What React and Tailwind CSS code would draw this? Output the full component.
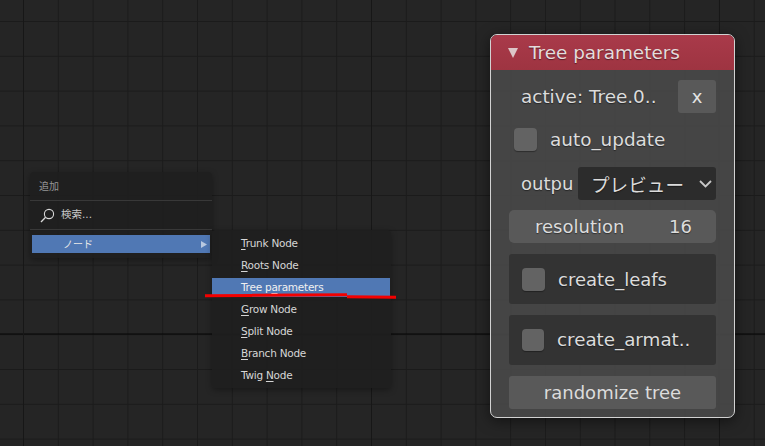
const sans = "font-['DejaVu_Sans','Noto_Sans_CJK_JP',sans-serif]";

function Check({ size = "w-[23px] h-[23px]" }) {
  return <div className={`${size} shrink-0 rounded-[4px] bg-[#636363] shadow-[0_1px_1px_rgba(0,0,0,0.35)]`} />;
}

function MenuItem({ before = "", mark, after, active }) {
  const state = active
    ? "h-[19px] mt-[1px] mb-[2px] mr-[1px] bg-[#5078b4] text-[#f0f0f0]"
    : "h-[22px] text-[#d6d6d6]";
  return (
    <div className={`${state} shrink-0 flex items-center pl-[29px] text-[10.5px] tracking-[-0.25px]`}>
      <span>
        {before}
        <span className="underline underline-offset-2">{mark}</span>
        {after}
      </span>
    </div>
  );
}

export default function App() {
  return (
    <div
      className={`${sans} relative w-[765px] h-[446px] overflow-hidden bg-[#252525] bg-[linear-gradient(to_right,#171717_1px,transparent_1px),linear-gradient(to_bottom,#050505_1.5px,transparent_1.5px),linear-gradient(to_right,#1b1b1b_1px,transparent_1px),linear-gradient(to_bottom,#1b1b1b_1px,transparent_1px)] bg-[size:348px_446px,765px_1000px,34.8px_34.8px,34.8px_34.8px] bg-[position:23px_0,0_333.5px,23px_0,0_21px]`}
    >
      {/* Add menu */}
      <div className="absolute left-[30px] top-[172px] w-[182px] h-[86px] rounded-[4px] bg-[#1f1f1f]/95 shadow-[0_2px_6px_rgba(0,0,0,0.35)] flex flex-col">
        <div className="h-[29px] shrink-0 flex items-center pl-[9px] text-[10px] text-[#969696] border-b border-[#383838]">追加</div>
        <div className="h-[29px] shrink-0 flex items-center pl-[10px] gap-[6px] text-[10.5px] text-[#c8c8c8] border-b border-[#383838]">
          <svg width="15" height="15" viewBox="0 0 15 15" fill="none" stroke="#d8d8d8" strokeWidth="1.1">
            <circle cx="9" cy="6" r="4.6" />
            <path d="M5.6 9.2 1 14" strokeWidth="1.3" />
          </svg>
          <span>検索...</span>
        </div>
        <div className="mx-[2px] mt-[5px] h-[18px] shrink-0 bg-[#5078b4] flex items-center justify-between pl-[31px] pr-[3px] text-[10px] text-[#e8e8e8]">
          <span>ノード</span>
          <svg width="6" height="7" viewBox="0 0 6 7"><path d="M0 0 6 3.5 0 7Z" fill="#b8c8e0" /></svg>
        </div>
      </div>

      {/* Submenu */}
      <div className="absolute left-[212px] top-[230px] w-[179px] h-[158px] rounded-[4px] bg-[#1f1f1f]/95 shadow-[0_2px_6px_rgba(0,0,0,0.35)] flex flex-col pt-[3px]">
        <MenuItem mark="T" after="runk Node" />
        <MenuItem mark="R" after="oots Node" />
        <MenuItem before="Tree p" mark="a" after="rameters" active />
        <MenuItem mark="G" after="row Node" />
        <MenuItem mark="S" after="plit Node" />
        <MenuItem mark="B" after="ranch Node" />
        <MenuItem before="Twig " mark="N" after="ode" />
      </div>

      {/* Red annotation */}
      <svg className="absolute left-[200px] top-[290px]" width="200" height="12" viewBox="0 0 200 12" fill="none" stroke="#f30000" strokeWidth="3">
        <path d="M5 5.8 52 5.5" />
        <path d="M52 5.3 147 4.8" />
        <path d="M147 6.8 196 7.2" />
      </svg>

      {/* Node panel */}
      <div className="absolute left-[490px] top-[34px] w-[245px] h-[384px] rounded-[7px] border border-[#d2d2d2] bg-[#474747]/95 shadow-[0_3px_14px_rgba(0,0,0,0.5)] overflow-hidden flex flex-col text-[18px] text-[#dcdcdc] [text-shadow:0_1px_1px_rgba(0,0,0,0.45)]">
        <div className="h-[35px] shrink-0 bg-[linear-gradient(to_bottom,#a93a4a,#9e3441)] flex items-center pl-[17px] gap-[11px] text-[#e4dcdc]">
          <svg width="10" height="10" viewBox="0 0 10 10"><path d="M0 0H10L5 10Z" fill="#dcc6c8" /></svg>
          <span className="text-[18.4px]">Tree parameters</span>
        </div>
        <div className="flex-1 flex flex-col pl-[18px] pr-[18px] pt-[10px]">
          <div className="h-[33px] flex items-center justify-between pl-[12px]">
            <span className="text-[18.4px]">active: Tree.0..</span>
            <button className="w-[38px] h-[33px] rounded-[3px] bg-[#595959] text-[#e4e4e4]">x</button>
          </div>
          <div className="h-[23px] mt-[15px] flex items-center pl-[5px] gap-[13px]">
            <Check />
            <span className="text-[18.4px]">auto_update</span>
          </div>
          <div className="h-[33px] mt-[16px] flex items-center justify-between pl-[12px]">
            <span>outpu</span>
            <div className="w-[138px] h-[33px] rounded-[3px] bg-[#2c2c2c] flex items-center justify-between pl-[13px] pr-[4px] font-['Noto_Sans_CJK_JP',sans-serif]">
              <span className="text-[18.6px]">プレビュー</span>
              <svg width="13" height="8" viewBox="0 0 13 8" fill="none" stroke="#c8c8c8" strokeWidth="1.8"><path d="M1 1 6.5 6.5 12 1" /></svg>
            </div>
          </div>
          <div className="h-[33px] mt-[10px] rounded-[5px] bg-[#595959] flex items-center justify-between pl-[26px] pr-[24px]">
            <span>resolution</span>
            <span>16</span>
          </div>
          <div className="h-[50px] mt-[11px] rounded-[3px] bg-[#333333] flex items-center pl-[13px] gap-[13px]">
            <Check />
            <span>create_leafs</span>
          </div>
          <div className="h-[50px] mt-[11px] rounded-[3px] bg-[#333333] flex items-center pl-[13px] gap-[13px]">
            <Check size="w-[22px] h-[22px]" />
            <span className="text-[18.3px] -mt-[1px]">create_armat..</span>
          </div>
          <button className="h-[33px] mt-[11px] rounded-[3px] bg-[#595959] text-center">randomize tree</button>
        </div>
      </div>
    </div>
  );
}
